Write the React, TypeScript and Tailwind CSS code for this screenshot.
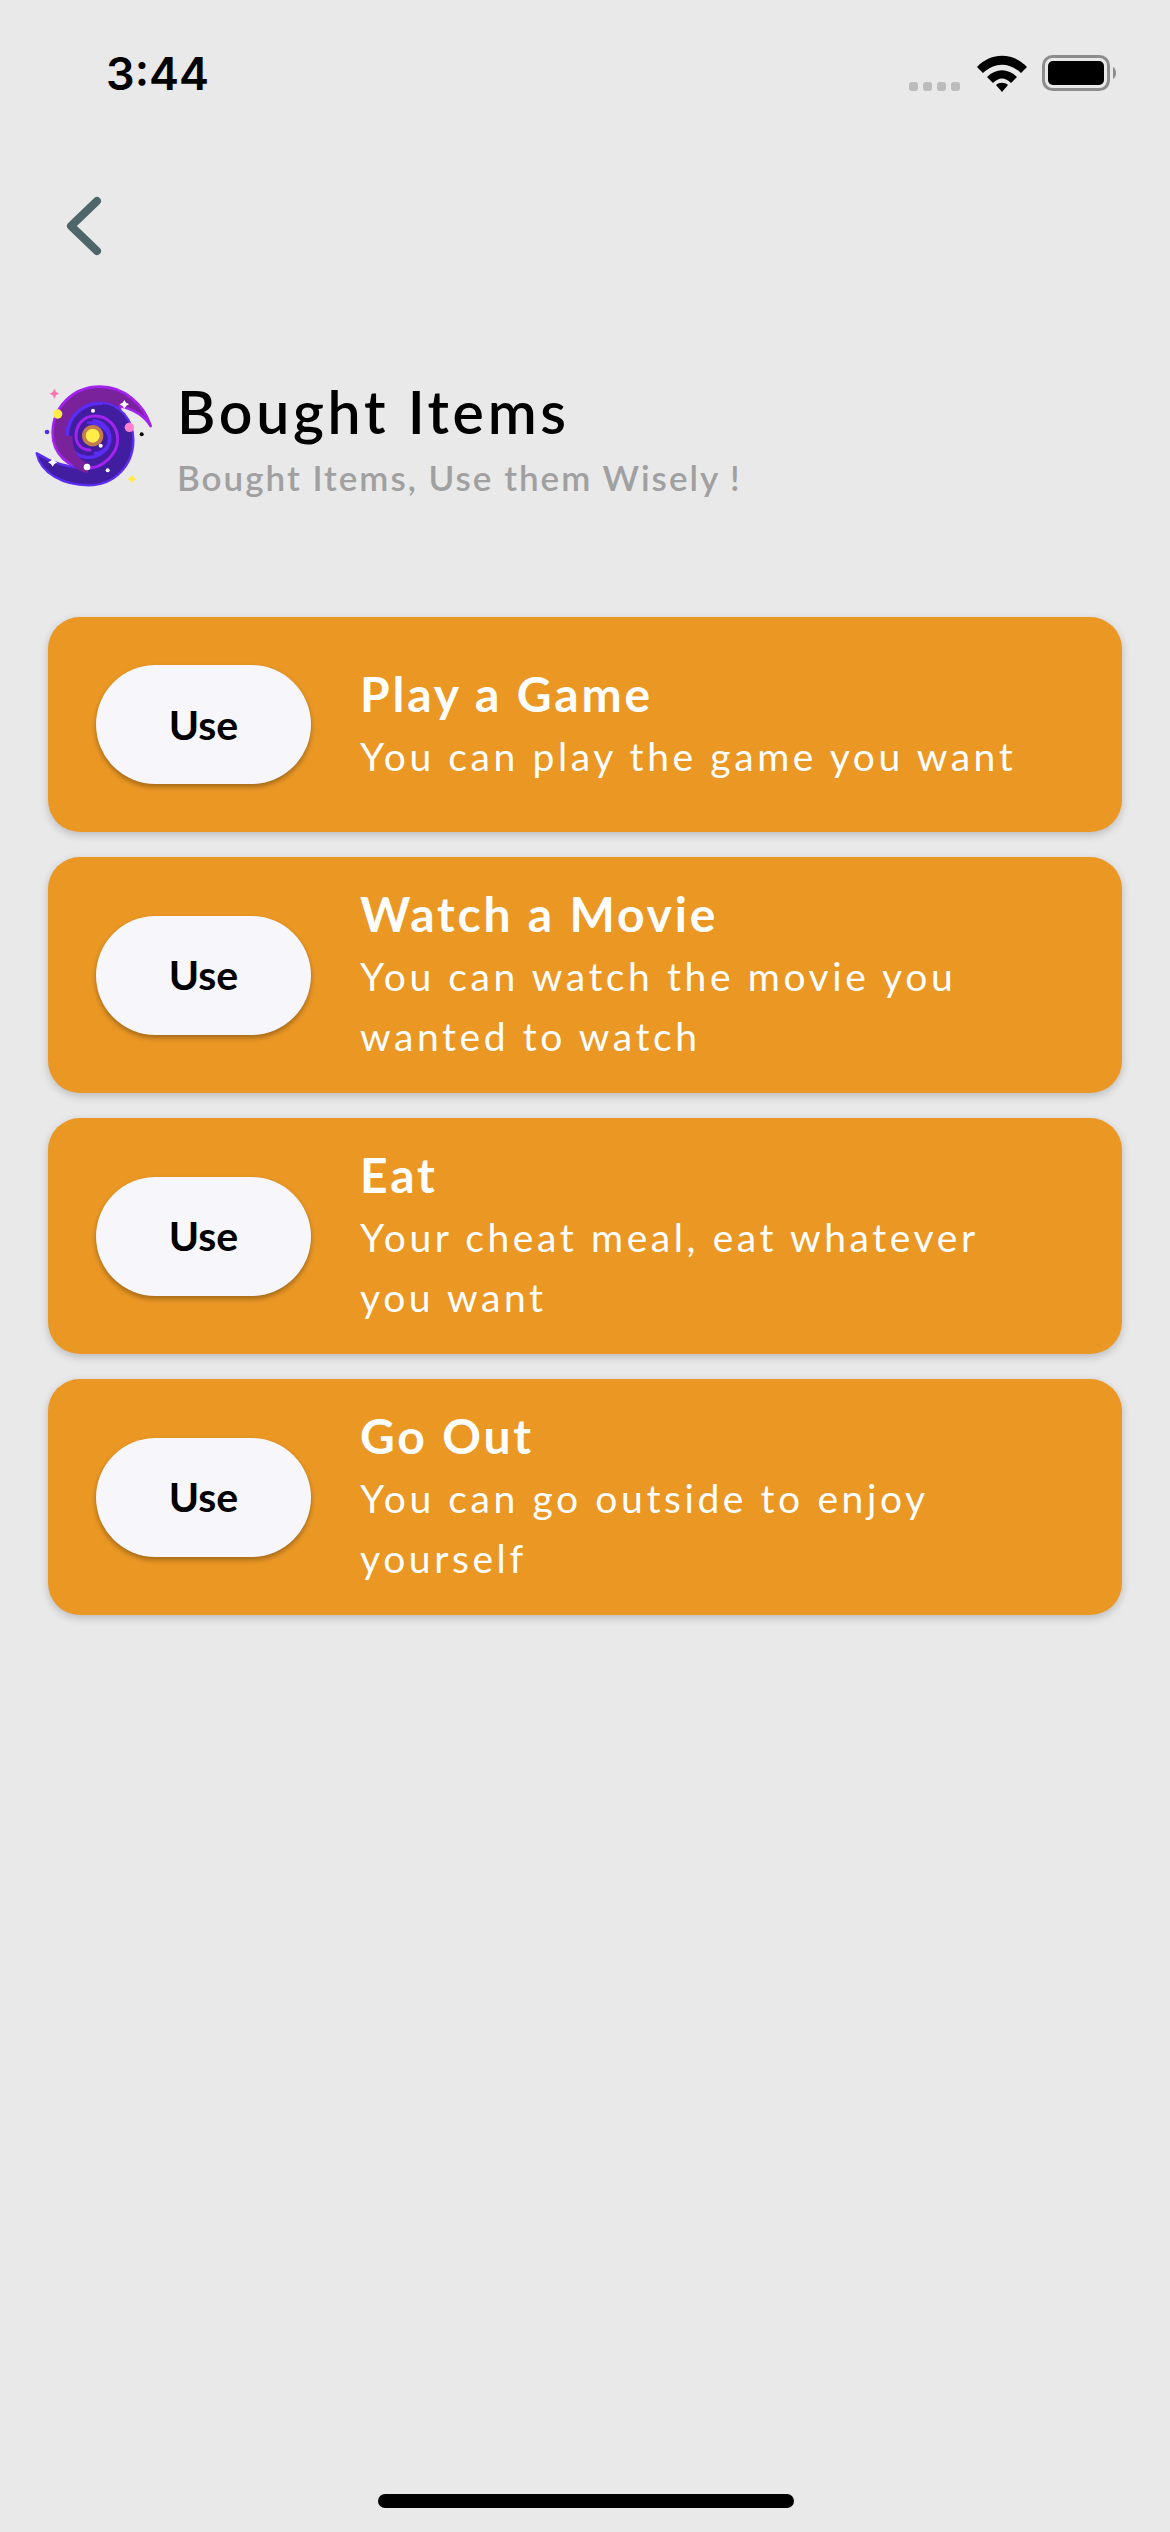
import React from "react";

const items = [
  { title: "Play a Game", desc: "You can play the game you want" },
  { title: "Watch a Movie", desc: "You can watch the movie you\nwanted to watch" },
  { title: "Eat", desc: "Your cheat meal, eat whatever\nyou want" },
  { title: "Go Out", desc: "You can go outside to enjoy\nyourself" },
];

function Galaxy() {
  return (
    <svg width="150" height="120" viewBox="0 0 450 360" className="block">
      <path d="M392 168C370 100 310 50 240 50C160 50 98 110 98 190C98 250 145 296 205 296L300 250L300 108C340 118 375 140 392 168Z" fill="#7a229c" stroke="#a222ee" strokeWidth="8" strokeLinejoin="round" />
      <path d="M50 250C62 310 130 346 205 346C285 346 340 285 340 210C340 150 300 100 240 98C190 98 140 140 140 195C140 250 170 294 205 294C140 296 90 275 50 250Z" fill="#411da0" stroke="#5b2cf2" strokeWidth="7" strokeLinejoin="round" />
      <path d="M245 100C190 98 142 140 142 197C142 235 170 262 205 262C240 262 270 236 270 205C270 178 250 155 222 152" fill="none" stroke="#5b2cf2" strokeWidth="10" strokeLinecap="round" />
      <path d="M205 294C170 290 142 250 142 197" fill="none" stroke="#7a229c" strokeWidth="30" />
      <path d="M205 294C245 294 293 255 293 208C293 168 262 138 225 138C190 138 168 165 168 198C168 222 185 240 210 240" fill="none" stroke="#a222ee" strokeWidth="9" strokeLinecap="round" />
      <path d="M205 158C240 158 268 180 268 208C268 232 248 248 225 250" fill="none" stroke="#5b2cf2" strokeWidth="9" strokeLinecap="round" />
      <circle cx="218" cy="197" r="32" fill="#c27d4e" />
      <circle cx="218" cy="197" r="21" fill="#ffec4a" />
      <circle cx="113" cy="132" r="14" fill="#ffec4a" />
      <circle cx="328" cy="172" r="14" fill="#ff7fcf" />
      <circle cx="81" cy="186" r="7" fill="#5b2cf2" />
      <circle cx="365" cy="193" r="6" fill="#000000" />
      <circle cx="219" cy="122" r="6" fill="#ffffff" />
      <circle cx="242" cy="227" r="6" fill="#ffffff" />
      <circle cx="201" cy="291" r="10" fill="#ffffff" />
      <circle cx="263" cy="301" r="6" fill="#ffffff" />
      <path d="M103 56L108 66L118 71L108 76L103 86L98 76L88 71L98 66Z" fill="#ff78b4" />
      <path d="M313 90L318 98L327 103L318 108L313 116L308 108L299 103L308 98Z" fill="#ffffff" />
      <path d="M98 264L103 272L112 277L103 282L98 290L93 282L84 277L93 272Z" fill="#ffffff" />
      <path d="M336 314L341 322L350 327L341 332L336 341L331 332L322 327L331 322Z" fill="#ffec4a" />
    </svg>
  );
}

export default function App() {
  return (
    <div className="relative h-[2532px] w-[1170px] overflow-hidden bg-[#e9e9e9] font-['Lato',sans-serif]">
      <div className="flex h-[110px] items-start justify-between pl-[106px] pr-[52px] pt-[47px]">
        <span className="font-['Inter',sans-serif] text-[45px] font-semibold leading-[54px] text-black">3:44</span>
        <div className="flex items-start pt-[8px]">
          <div className="mt-[27px] flex gap-[5px]">
            {[0, 1, 2, 3].map((i) => (
              <div key={i} className="h-[9px] w-[9px] rounded-[3px] bg-[#bcbcbc]" />
            ))}
          </div>
          <svg width="50" height="38" viewBox="0 0 50 38" className="ml-[17px]">
            <path d="M0 12C14 -3 36 -3 50 12L44 18C32 7 18 7 6 18Z" fill="#000" />
            <path d="M10 22C19 13 31 13 40 22L34 28C28 22 22 22 16 28Z" fill="#000" />
            <path d="M19 30C22 27 28 27 31 30L25 37Z" fill="#000" />
          </svg>
          <svg width="76" height="38" viewBox="0 0 76 38" className="ml-[15px]">
            <rect x="1.5" y="1.5" width="65" height="33" rx="9" fill="none" stroke="#8c8c8c" strokeWidth="3" />
            <rect x="6" y="6" width="56" height="24" rx="5" fill="#000" />
            <path d="M71 12C75 14 75 22 71 24Z" fill="#8c8c8c" />
          </svg>
        </div>
      </div>
      <div className="pl-[64px] pt-[84px]">
        <svg width="40" height="64" viewBox="0 0 40 64" className="block">
          <path d="M33 7L7 32L33 57" fill="none" stroke="#4e666a" strokeWidth="8" strokeLinecap="round" strokeLinejoin="round" />
        </svg>
      </div>
      <div className="mt-[112px] flex items-start pl-[20px]">
        <Galaxy />
        <div className="ml-[7px] flex flex-col pt-[6px]">
          <h1 className="text-[59px] font-semibold leading-[72px] tracking-[3.7px] text-black">Bought Items</h1>
          <p className="mt-[7px] text-[35px] font-semibold leading-[44px] tracking-[2px] text-[#a0a0a0]">Bought Items, Use them Wisely !</p>
        </div>
      </div>
      <div className="mt-[102px] flex flex-col gap-[25px] px-[48px] pt-[16px]">
        {items.map((item) => (
          <div key={item.title} className="flex min-h-[215px] items-center rounded-[32px] bg-[#ea9724] py-[27px] pl-[48px] shadow-[0_3px_8px_rgba(0,0,0,0.2)]">
            <div className="flex h-[119px] w-[215px] shrink-0 items-center justify-center rounded-[60px] bg-[#f7f7fb] shadow-[0_3px_5px_rgba(0,0,0,0.3)]">
              <span className="text-[41px] font-bold text-black">Use</span>
            </div>
            <div className="ml-[49px] flex flex-col text-white">
              <h2 className="text-[48px] font-bold leading-[60px] tracking-[2.8px]">{item.title}</h2>
              <p className="whitespace-pre-line pt-[2px] text-[39px] font-normal leading-[60px] tracking-[3.6px]">{item.desc}</p>
            </div>
          </div>
        ))}
      </div>
      <div className="absolute bottom-[24px] left-[378px] h-[14px] w-[416px] rounded-full bg-black" />
    </div>
  );
}
